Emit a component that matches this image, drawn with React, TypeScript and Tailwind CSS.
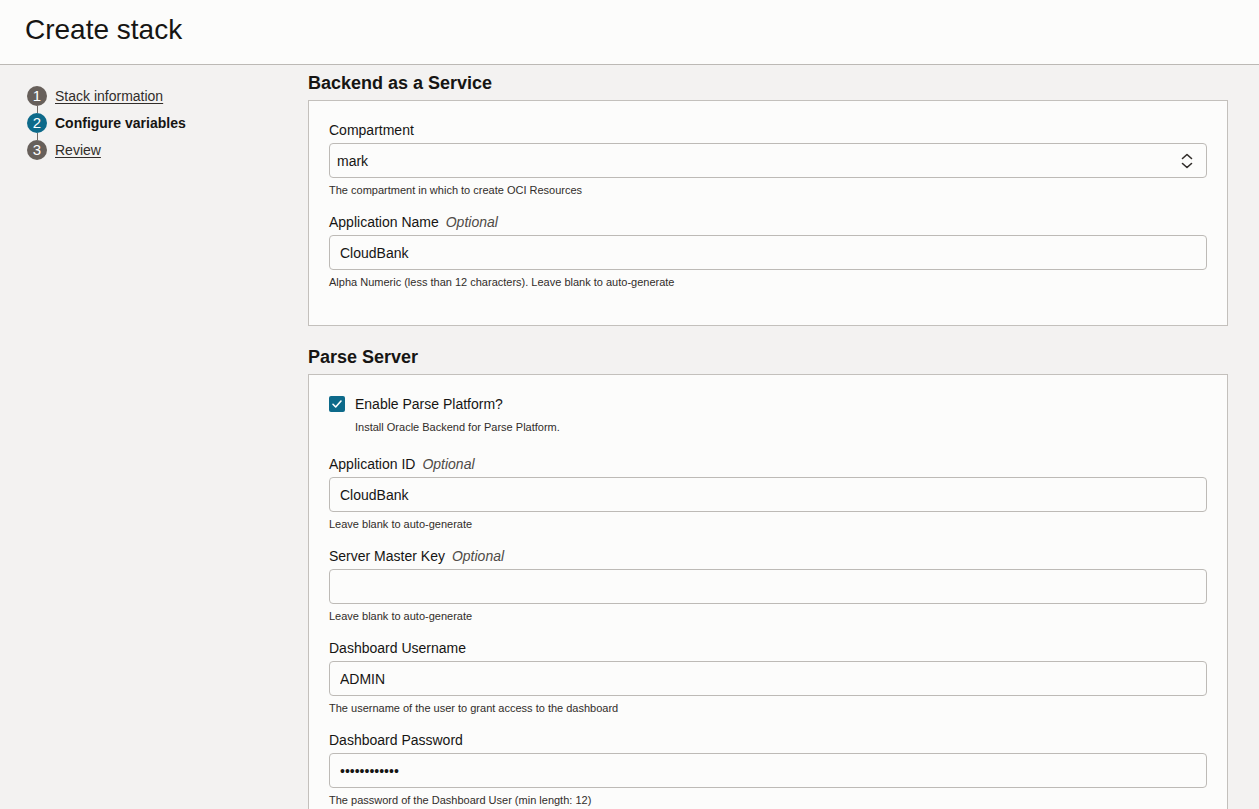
import React from 'react';

type Field = {
  label: string;
  optional?: boolean;
  value: string;
  help: string;
  password?: boolean;
};

const parseFields: Field[] = [
  { label: 'Application ID', optional: true, value: 'CloudBank', help: 'Leave blank to auto-generate' },
  { label: 'Server Master Key', optional: true, value: '', help: 'Leave blank to auto-generate' },
  { label: 'Dashboard Username', value: 'ADMIN', help: 'The username of the user to grant access to the dashboard' },
  { label: 'Dashboard Password', value: 'abcdefghijkl', help: 'The password of the Dashboard User (min length: 12)', password: true },
];

const steps = [
  { n: 1, label: 'Stack information', current: false },
  { n: 2, label: 'Configure variables', current: true },
  { n: 3, label: 'Review', current: false },
];

function Label({ text, optional }: { text: string; optional?: boolean }) {
  return (
    <div className="h-[18px] text-[14px] leading-[18px] text-[#161513]">
      {text}
      {optional && <span className="ml-[7px] italic text-[#4f4b47]">Optional</span>}
    </div>
  );
}

function Help({ text }: { text: string }) {
  return <div className="mt-[5px] h-[14px] text-[11px] leading-[14px] text-[#312d2a]">{text}</div>;
}

function TextField({ f, first }: { f: Field; first?: boolean }) {
  return (
    <div className={first ? '' : 'mt-[16px]'}>
      <Label text={f.label} optional={f.optional} />
      <input
        type={f.password ? 'password' : 'text'}
        defaultValue={f.value}
        className="mt-[4px] block h-[35px] w-full rounded-[4px] border border-[#bdbab6] bg-[#fcfcfb] px-[10px] text-[14px] text-[#161513] outline-none"
      />
      <Help text={f.help} />
    </div>
  );
}

function SelectField() {
  return (
    <div>
      <Label text="Compartment" />
      <div className="mt-[4px] flex h-[35px] w-full items-center justify-between rounded-[4px] border border-[#bdbab6] bg-[#fcfcfb] pl-[7px] pr-[13px] pt-[2px] text-[14px] text-[#161513]">
        <span>mark</span>
        <svg width="12" height="16" viewBox="0 0 12 16" fill="none" stroke="#312d2a" strokeWidth="1.6" strokeLinecap="round" strokeLinejoin="round" className="-mt-[2px]">
          <path d="M1.5 5.5 6 1.5l4.5 4" />
          <path d="M1.5 10.5 6 14.5l4.5-4" />
        </svg>
      </div>
      <Help text="The compartment in which to create OCI Resources" />
    </div>
  );
}

export default function App() {
  return (
    <div className="min-h-[809px] bg-[#f3f2f1] font-['Liberation_Sans',Arial,sans-serif] text-[#161513]">
      <header className="h-[65px] border-b border-[#bcb9b5] bg-[#fcfcfb] pl-[25px] pt-[14px]">
        <h1 className="text-[28px] leading-[32px] font-normal">Create stack</h1>
      </header>
      <div className="flex">
        <nav className="w-[308px] shrink-0 pl-[27px] pt-[21px]">
          {steps.map((s, i) => (
            <div key={s.n}>
              {i > 0 && <div className="ml-[9.5px] h-[7px] w-px bg-[#6f6964]" />}
              <div className="flex h-[20px] items-center gap-[8px]">
                <span
                  className={
                    'flex h-[20px] w-[20px] items-center justify-center rounded-full text-[15px] text-white ' +
                    (s.current ? 'bg-[#0d6a8a]' : 'bg-[#67605b]')
                  }
                >
                  {s.n}
                </span>
                {s.current ? (
                  <span className="text-[14px] font-bold">{s.label}</span>
                ) : (
                  <a className="text-[14px] text-[#312d2a] underline underline-offset-2">{s.label}</a>
                )}
              </div>
            </div>
          ))}
        </nav>

        <main className="mr-[31px] flex-1 pt-[6px]">
          <h2 className="text-[18px] leading-[24px] font-bold">Backend as a Service</h2>
          <section className="mt-[5px] h-[226px] border border-[#c3c0bc] bg-[#fcfcfb] px-[20px] pt-[20px]">
            <SelectField />
            <TextField
              f={{ label: 'Application Name', optional: true, value: 'CloudBank', help: 'Alpha Numeric (less than 12 characters). Leave blank to auto-generate' }}
            />
          </section>

          <h2 className="mt-[19px] text-[18px] leading-[24px] font-bold">Parse Server</h2>
          <section className="mt-[5px] border border-[#c3c0bc] bg-[#fcfcfb] px-[20px] pt-[20px] pb-[30px]">
            <div className="flex h-[18px] items-center gap-[10px]">
              <span className="flex h-[16px] w-[16px] items-center justify-center rounded-[2px] bg-[#0d6a8a]">
                <svg width="12" height="12" viewBox="0 0 12 12" fill="none" stroke="white" strokeWidth="1.6" strokeLinecap="round" strokeLinejoin="round">
                  <path d="M2 6.3 4.7 9 10 3" />
                </svg>
              </span>
              <span className="text-[14px] leading-[18px]">Enable Parse Platform?</span>
            </div>
            <div className="ml-[26px] mt-[7px] h-[14px] text-[11px] leading-[14px] text-[#312d2a]">
              Install Oracle Backend for Parse Platform.
            </div>
            <div className="mt-[21px]">
              {parseFields.map((f, i) => (
                <TextField key={f.label} f={f} first={i === 0} />
              ))}
            </div>
          </section>
        </main>
      </div>
    </div>
  );
}
